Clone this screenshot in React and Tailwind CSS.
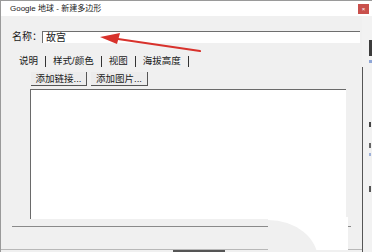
export default function App() {
  const tabs = ["说明", "样式/颜色", "视图", "海拔高度"];

  return (
    <div className="relative w-[372px] h-[252px] overflow-hidden bg-[#f0f0f0] text-[#1a1a1a] font-['Liberation_Sans','Noto_Sans_CJK_SC',sans-serif]">
      {/* title bar */}
      <div className="flex h-[16px] items-center justify-between border-t border-l border-[#9a9a9a] bg-white pl-[9px] pr-[3px]">
        <span className="text-[8px] leading-none">Google 地球 - 新建多边形</span>
        <div className="flex h-[10px] w-[11px] items-center justify-center bg-[#c9504c] text-[6px] leading-none text-white">
          ×
        </div>
      </div>

      <div className="flex h-[236px]">
        {/* dialog body */}
        <div className="relative flex w-[362px] shrink-0 flex-col border-l border-[#9a9a9a]">
          {/* name row */}
          <div className="mt-[15px] flex h-[12px] items-center">
            <span className="w-[41px] shrink-0 whitespace-nowrap pl-[11px] text-[10px] leading-none">名称：</span>
            <div className="flex h-[12px] w-[318px] shrink-0 items-center border-t border-l border-[#6e6e6e] bg-white pl-[3px] text-[10px] leading-none">
              故宫
            </div>
          </div>

          {/* tabs */}
          <div className="mt-[12px] flex h-[12px] items-center whitespace-nowrap pl-[18px] text-[9.5px] leading-none">
            {tabs.map((t) => (
              <div key={t} className="flex items-center">
                <span>{t}</span>
                <span className="mx-[7px] h-[11px] w-px bg-[#333]" />
              </div>
            ))}
          </div>

          {/* pane */}
          <div className="ml-[11px] mt-[1px] flex h-[159px] w-[339px] flex-col border-b border-[#8a8a8a] pl-[19px]">
            <div className="mt-[4px] flex gap-[4px] whitespace-nowrap">
              <div className="flex h-[14px] w-[56px] items-center justify-center border-r border-b border-[#555] bg-[#ececec] text-[9.5px] leading-none">
                添加链接...
              </div>
              <div className="flex h-[14px] w-[57px] items-center justify-center border-r border-b border-[#555] bg-[#ececec] text-[9.5px] leading-none">
                添加图片...
              </div>
            </div>
            <div className="ml-[-1px] mt-[3px] h-[130px] w-[316px] border-t border-l border-[#6a6a6a] bg-white" />
          </div>

          {/* bottom edge (button tops) */}
          <div className="mt-auto flex h-[3px] border-t border-[#b8b8b8]">
            <div className="ml-[172px] h-[2px] w-[52px] bg-[#555]" />
          </div>

          {/* glare over the lower right */}
          <div className="absolute left-[267px] top-[201px] h-[33px] w-[80px] overflow-hidden bg-white">
            <div className="absolute left-0 top-[3px] h-[80px] w-[50px] rounded-tr-[50px_40px] bg-[#f0f0f0]" />
          </div>
        </div>

        {/* window behind */}
        <div className="relative flex-1 bg-[#f2f2f2]">
          <div className="absolute left-0 top-[51px] h-[185px] w-px bg-[#555]" />
          <div className="absolute left-[7px] top-[24px] h-[16px] w-[3px] bg-[#3c3c3c]" />
          <div className="absolute left-[7px] top-[44px] h-[3px] w-[3px] bg-[#8fa6d6]" />
          <div className="absolute left-[7px] top-[106px] h-[5px] w-[2px] bg-[#444]" />
          <div className="absolute left-[7px] top-[127px] h-[5px] w-[2px] bg-[#666]" />
          <div className="absolute left-[7px] top-[137px] h-[3px] w-[2px] bg-[#9fb1d8]" />
          <div className="absolute left-[7px] top-[170px] h-[6px] w-[2px] bg-[#555]" />
        </div>
      </div>

      {/* red arrow */}
      <svg className="pointer-events-none absolute left-0 top-0" width="372" height="252">
        <path d="M200 51 L118 39" stroke="#d8322c" strokeWidth="2.2" strokeLinecap="round" />
        <polygon points="100,37 120,33 117,44" fill="#d8322c" />
      </svg>
    </div>
  );
}
